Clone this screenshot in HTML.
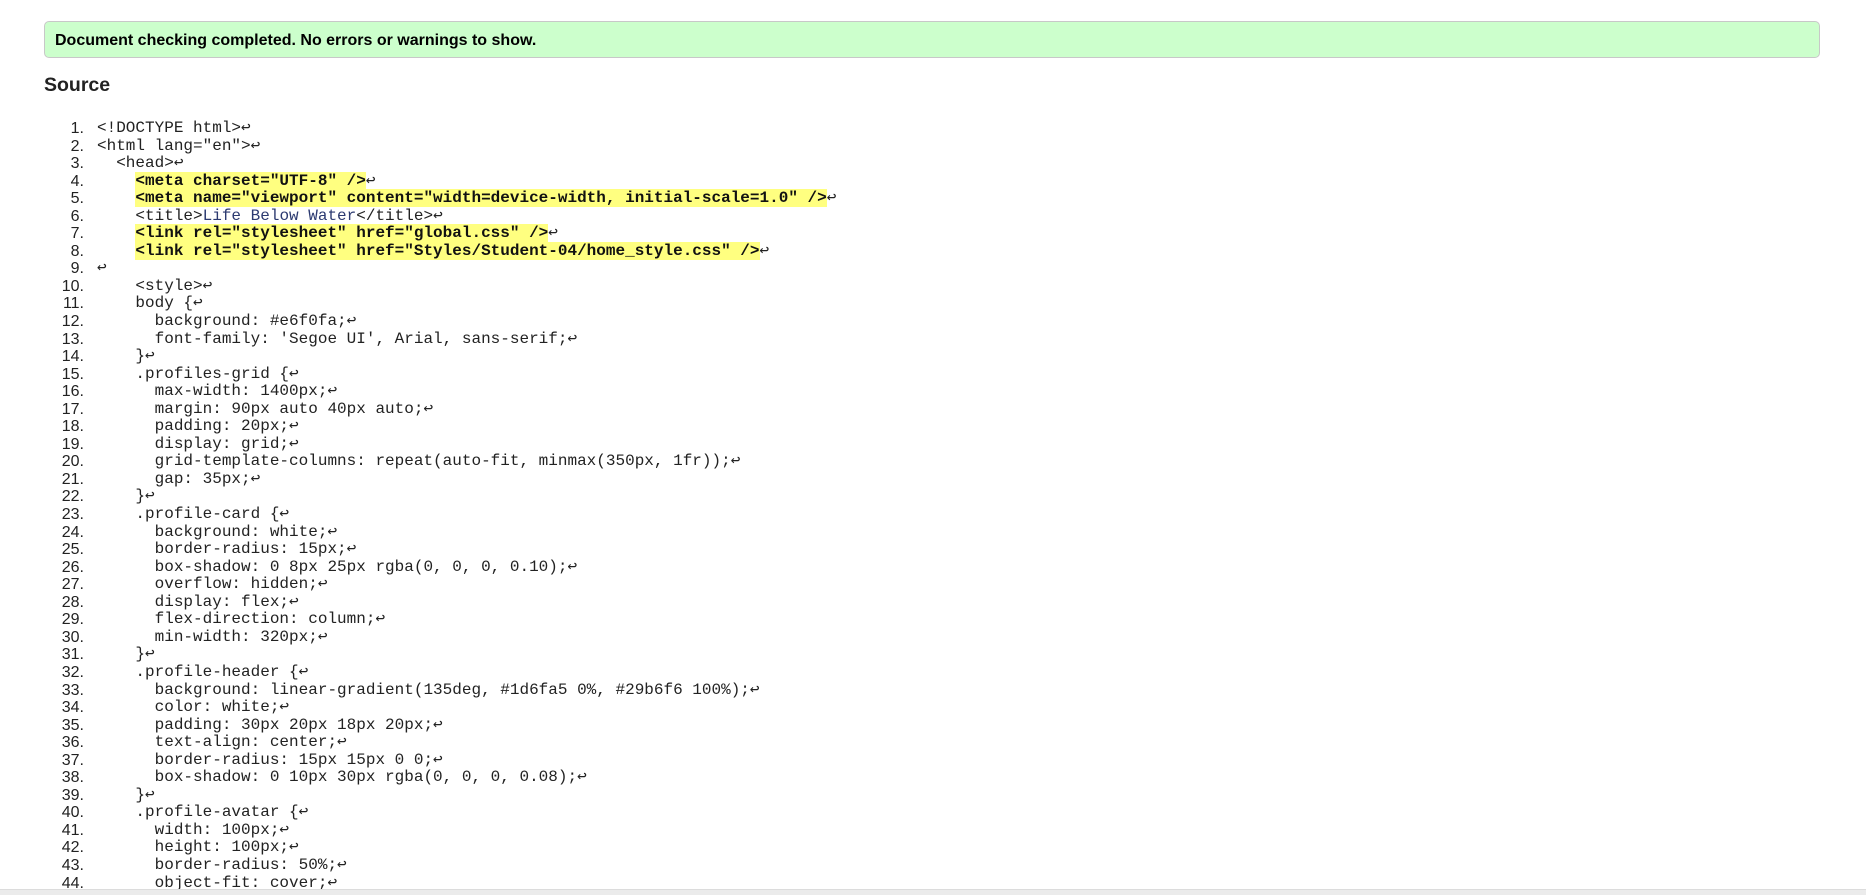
<!DOCTYPE html>
<html><head><style>
html,body{margin:0;padding:0;background:#fff;width:1866px;height:894px;overflow:hidden;}
.msg{position:absolute;left:44px;top:21px;width:1774px;height:35px;background:#ccffcc;border:1px solid #c8c8c8;border-radius:5px;box-sizing:content-box;}
.msg span{position:absolute;left:10px;top:10px;font:bold 16px "Liberation Sans",sans-serif;color:#000;}
h2{position:absolute;left:44px;top:74px;margin:0;font:bold 19.5px "Liberation Sans",sans-serif;color:#222;}
.code{position:absolute;left:0;top:120px;}
.l{position:relative;height:17.56px;line-height:17.56px;white-space:pre;font:16px/17.56px "Liberation Mono","DejaVu Sans Mono",monospace;color:#222;}
.l .n{position:absolute;top:0;right:calc(100% - 84px);left:0;text-align:right;font:16px/17.56px "Liberation Sans",sans-serif;color:#222;}
.l .c{position:absolute;left:97px;}
.h{background:#ffff80;font-weight:bold;color:#111;}
.t{color:#2c3a70;}
.bar{position:absolute;left:0;top:889px;width:1866px;height:5px;background:#ebebeb;border-top:1px solid #dcdcdc;}
</style></head><body>
<div class="msg"><span>Document checking completed. No errors or warnings to show.</span></div>
<h2>Source</h2>
<div class="code">
<div class="l"><span class="n">1.</span><span class="c">&lt;!DOCTYPE html&gt;↩</span></div>
<div class="l"><span class="n">2.</span><span class="c">&lt;html lang="en"&gt;↩</span></div>
<div class="l"><span class="n">3.</span><span class="c">  &lt;head&gt;↩</span></div>
<div class="l"><span class="n">4.</span><span class="c">    <span class="h">&lt;meta charset="UTF-8" /&gt;</span>↩</span></div>
<div class="l"><span class="n">5.</span><span class="c">    <span class="h">&lt;meta name="viewport" content="width=device-width, initial-scale=1.0" /&gt;</span>↩</span></div>
<div class="l"><span class="n">6.</span><span class="c">    &lt;title&gt;<span class="t">Life Below Water</span>&lt;/title&gt;↩</span></div>
<div class="l"><span class="n">7.</span><span class="c">    <span class="h">&lt;link rel="stylesheet" href="global.css" /&gt;</span>↩</span></div>
<div class="l"><span class="n">8.</span><span class="c">    <span class="h">&lt;link rel="stylesheet" href="Styles/Student-04/home_style.css" /&gt;</span>↩</span></div>
<div class="l"><span class="n">9.</span><span class="c">↩</span></div>
<div class="l"><span class="n">10.</span><span class="c">    &lt;style&gt;↩</span></div>
<div class="l"><span class="n">11.</span><span class="c">    body {↩</span></div>
<div class="l"><span class="n">12.</span><span class="c">      background: #e6f0fa;↩</span></div>
<div class="l"><span class="n">13.</span><span class="c">      font-family: 'Segoe UI', Arial, sans-serif;↩</span></div>
<div class="l"><span class="n">14.</span><span class="c">    }↩</span></div>
<div class="l"><span class="n">15.</span><span class="c">    .profiles-grid {↩</span></div>
<div class="l"><span class="n">16.</span><span class="c">      max-width: 1400px;↩</span></div>
<div class="l"><span class="n">17.</span><span class="c">      margin: 90px auto 40px auto;↩</span></div>
<div class="l"><span class="n">18.</span><span class="c">      padding: 20px;↩</span></div>
<div class="l"><span class="n">19.</span><span class="c">      display: grid;↩</span></div>
<div class="l"><span class="n">20.</span><span class="c">      grid-template-columns: repeat(auto-fit, minmax(350px, 1fr));↩</span></div>
<div class="l"><span class="n">21.</span><span class="c">      gap: 35px;↩</span></div>
<div class="l"><span class="n">22.</span><span class="c">    }↩</span></div>
<div class="l"><span class="n">23.</span><span class="c">    .profile-card {↩</span></div>
<div class="l"><span class="n">24.</span><span class="c">      background: white;↩</span></div>
<div class="l"><span class="n">25.</span><span class="c">      border-radius: 15px;↩</span></div>
<div class="l"><span class="n">26.</span><span class="c">      box-shadow: 0 8px 25px rgba(0, 0, 0, 0.10);↩</span></div>
<div class="l"><span class="n">27.</span><span class="c">      overflow: hidden;↩</span></div>
<div class="l"><span class="n">28.</span><span class="c">      display: flex;↩</span></div>
<div class="l"><span class="n">29.</span><span class="c">      flex-direction: column;↩</span></div>
<div class="l"><span class="n">30.</span><span class="c">      min-width: 320px;↩</span></div>
<div class="l"><span class="n">31.</span><span class="c">    }↩</span></div>
<div class="l"><span class="n">32.</span><span class="c">    .profile-header {↩</span></div>
<div class="l"><span class="n">33.</span><span class="c">      background: linear-gradient(135deg, #1d6fa5 0%, #29b6f6 100%);↩</span></div>
<div class="l"><span class="n">34.</span><span class="c">      color: white;↩</span></div>
<div class="l"><span class="n">35.</span><span class="c">      padding: 30px 20px 18px 20px;↩</span></div>
<div class="l"><span class="n">36.</span><span class="c">      text-align: center;↩</span></div>
<div class="l"><span class="n">37.</span><span class="c">      border-radius: 15px 15px 0 0;↩</span></div>
<div class="l"><span class="n">38.</span><span class="c">      box-shadow: 0 10px 30px rgba(0, 0, 0, 0.08);↩</span></div>
<div class="l"><span class="n">39.</span><span class="c">    }↩</span></div>
<div class="l"><span class="n">40.</span><span class="c">    .profile-avatar {↩</span></div>
<div class="l"><span class="n">41.</span><span class="c">      width: 100px;↩</span></div>
<div class="l"><span class="n">42.</span><span class="c">      height: 100px;↩</span></div>
<div class="l"><span class="n">43.</span><span class="c">      border-radius: 50%;↩</span></div>
<div class="l"><span class="n">44.</span><span class="c">      object-fit: cover;↩</span></div>
</div>
<div class="bar"></div>
</body></html>
